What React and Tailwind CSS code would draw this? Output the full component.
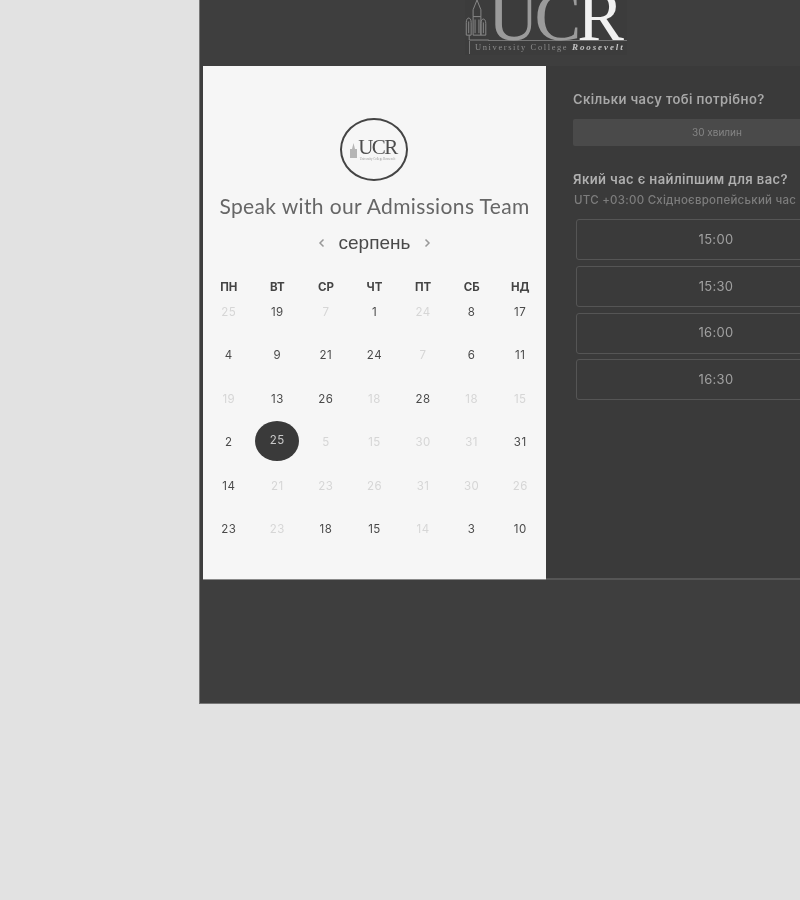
const SANS = { fontFamily: 'Inter, "Noto Sans", sans-serif' };

const HEAD = ["ПН", "ВТ", "СР", "ЧТ", "ПТ", "СБ", "НД"];
const ROWS = [
  [["25", 0], ["19", 1], ["7", 0], ["1", 1], ["24", 0], ["8", 1], ["17", 1]],
  [["4", 1], ["9", 1], ["21", 1], ["24", 1], ["7", 0], ["6", 1], ["11", 1]],
  [["19", 0], ["13", 1], ["26", 1], ["18", 0], ["28", 1], ["18", 0], ["15", 0]],
  [["2", 1], ["25", 2], ["5", 0], ["15", 0], ["30", 0], ["31", 0], ["31", 1]],
  [["14", 1], ["21", 0], ["23", 0], ["26", 0], ["31", 0], ["30", 0], ["26", 0]],
  [["23", 1], ["23", 0], ["18", 1], ["15", 1], ["14", 0], ["3", 1], ["10", 1]],
];
const TIMES = ["15:00", "15:30", "16:00", "16:30"];

function Tower({ className }) {
  return (
    <svg className={className} viewBox="0 0 24 42" fill="none" stroke="#8a8a8a" strokeWidth="1">
      <path d="M12 0L8 10V17M12 0L16 10V17" />
      <path d="M1 23C1 17 6 17 6 23V36H1ZM8 17H16V36H8ZM16 24C16 18 21 18 21 24V36H16Z" />
      <path d="M3.500 22V34M10 20V34M14 20V34M18.500 23V34" />
      <path d="M4 36V41H24" />
    </svg>
  );
}

function Header() {
  return (
    <div className="h-[66px] shrink-0 overflow-hidden flex justify-start pl-[265px] bg-[#3e3e3e]">
      <div className="w-[162px] h-[55px] flex flex-col bg-[#3c3c3c]" style={{ fontFamily: '"Liberation Serif", serif' }}>
        <div className="h-[41px] flex overflow-hidden">
          <Tower className="w-[24px] h-[41px] shrink-0" />
          <div className="flex-1 -ml-[1px] border-b border-[#777] flex items-end text-[70px] leading-[40px] tracking-[-4px] whitespace-nowrap pb-[3px]">
            <span className="text-[#9b9b9b]">UC</span>
            <span className="text-[#f1f1f1]">R</span>
          </div>
        </div>
        <div className="ml-[4px] pl-[5px] h-[13px] border-l border-[#777] text-[8.500px] leading-[13px] tracking-[1.600px] text-[#8c8c8c] whitespace-nowrap">
          University College <i className="text-[#c4c4c4] font-bold tracking-[1.900px] text-[9px]">Roosevelt</i>
        </div>
      </div>
    </div>
  );
}

function RoundLogo() {
  return (
    <div className="w-[68px] h-[63px] -ml-[2px] rounded-[50%] border-[2px] border-[#444] flex items-center justify-center">
      <div className="flex items-center gap-[1px]" style={{ fontFamily: '"Liberation Serif", serif' }}>
        <svg width="7" height="15" viewBox="0 0 7 15" fill="#b5b5b5" className="mt-[1px]"><path d="M3.500 0L5 6H7V15H0V6H2Z" /></svg>
        <div className="flex flex-col items-center">
          <div className="text-[21px] leading-[19px] tracking-[-1.500px] text-[#4d4d4d]">UCR</div>
          <div className="text-[3px] leading-[4px] text-[#999] whitespace-nowrap">University College Roosevelt</div>
        </div>
      </div>
    </div>
  );
}

function Calendar() {
  return (
    <div className="w-[343px] shrink-0 bg-[#f6f6f6] flex flex-col items-center pt-[52px] border-b border-[#8a8a8a]">
      <RoundLogo />
      <div className="mt-[12px] text-[21px] leading-[26px] tracking-[0.370px] text-[#666] whitespace-nowrap" style={{ fontFamily: 'Lato, sans-serif' }}>
        Speak with our Admissions Team
      </div>
      <div className="mt-[11px] h-[26px] flex items-center gap-[14px]" style={{ fontFamily: '"Liberation Sans", sans-serif' }}>
        <svg width="7" height="10" viewBox="0 0 7 10" fill="none" stroke="#999" strokeWidth="1.500"><path d="M5.500 1.500L2 5l3.500 3.500" /></svg>
        <span className="text-[19px] leading-[26px] text-[#4a4a4a]">серпень</span>
        <svg width="7" height="10" viewBox="0 0 7 10" fill="none" stroke="#999" strokeWidth="1.500"><path d="M1.500 1.500L5 5 1.500 8.500" /></svg>
      </div>
      <div className="mt-[23px] grid grid-cols-7 w-[340px] text-center" style={SANS}>
        {HEAD.map((h) => (
          <div key={h} className="h-[23.500px] text-[11.500px] leading-[16px] font-bold text-[#444]">{h}</div>
        ))}
        {ROWS.flat().map(([n, s], i) => (
          <div key={i} className="h-[43.500px] flex justify-center">
            {s === 2 ? (
              <span className="-mt-[12px] w-[44px] h-[40px] rounded-[50%] bg-[#3a3a3a] text-[#c9c9c9] text-[11.500px] tracking-[0.500px] flex items-center justify-center pb-[1px]">{n}</span>
            ) : (
              <span className={`text-[11.500px] leading-[18px] tracking-[0.500px] ${s === 1 ? "text-[#4a4a4a]" : "text-[#d6d6d6]"}`}>{n}</span>
            )}
          </div>
        ))}
      </div>
    </div>
  );
}

function Side() {
  return (
    <div className="flex-1 bg-[#3a3a3a] pl-[27px] pt-[24px] border-b-[2px] border-[#555]" style={SANS}>
      <div className="text-[13px] leading-[18px] font-semibold tracking-[0.400px] text-[#a8a8a8] whitespace-nowrap">Скільки часу тобі потрібно?</div>
      <div className="mt-[11px] w-[288px] h-[27px] rounded-[2px] bg-[#4a4a4a] flex items-center justify-center text-[10px] text-[#858585]">30 хвилин</div>
      <div className="mt-[24px] text-[13px] leading-[18px] font-semibold tracking-[0.400px] text-[#b0b0b0] whitespace-nowrap">Який час є найліпшим для вас?</div>
      <div className="mt-[4px] text-[11.500px] leading-[16px] font-medium tracking-[0.250px] text-[#7d7d7d] whitespace-nowrap pl-[1px]">UTC +03:00 Східноєвропейський час</div>
      <div className="mt-[11px] ml-[3px] w-[280px] flex flex-col gap-[5.800px]">
        {TIMES.map((t) => (
          <div key={t} className="h-[41px] rounded-[3px] border border-[#555] flex items-center justify-center text-[13px] tracking-[0.300px] text-[#a0a0a0]">{t}</div>
        ))}
      </div>
    </div>
  );
}

export default function App() {
  return (
    <div className="w-[800px] h-[900px] overflow-hidden bg-[#e2e2e2] pl-[199px]">
      <div className="w-[700px] h-[704px] bg-[#3e3e3e] flex flex-col border-l border-b border-[#777] blur-[0.4px]">
        <Header />
        <div className="h-[514px] flex pl-[3px]">
          <Calendar />
          <Side />
        </div>
      </div>
    </div>
  );
}
